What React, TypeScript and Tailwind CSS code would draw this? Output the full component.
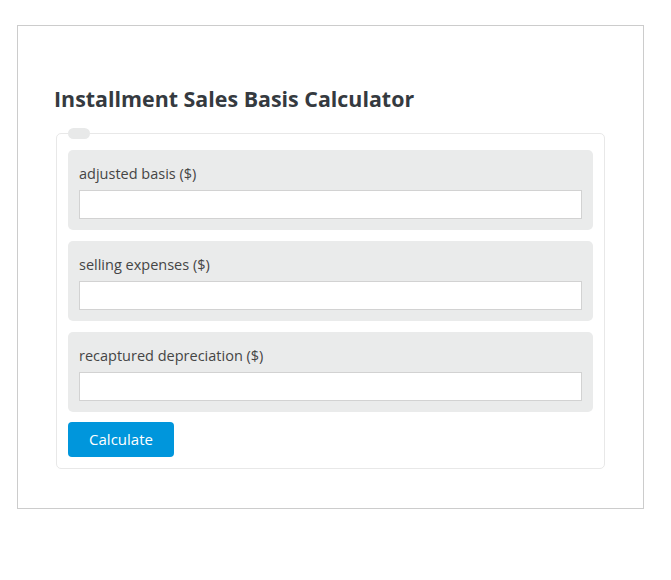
import { useState } from "react";

const FIELDS = [
  "adjusted basis ($)",
  "selling expenses ($)",
  "recaptured depreciation ($)",
];

export default function App() {
  const [values, setValues] = useState<string[]>(["", "", ""]);

  return (
    <div className="min-h-[580px] bg-white pl-[17px] pt-[25px] font-['Open_Sans',sans-serif]">
      <div className="w-[627px] border border-[#cccccc] px-[38px] pb-[39px] pt-[58px]">
        <h2 className="mb-[19px] ml-[-2px] text-[21.4px] font-bold leading-[30px] text-[#353a40]">
          Installment Sales Basis Calculator
        </h2>

        <div className="relative rounded-[5px] border border-[#e8e8e8] px-[11px] pb-[11px] pt-[16px]">
          {/* empty legend pill */}
          <div className="absolute left-[11px] top-[-6px] h-[11px] w-[22px] rounded-full bg-[#e8e9e9]" />

          <div className="flex flex-col gap-[11px]">
            {FIELDS.map((label, i) => (
              <div key={label} className="rounded-[5px] bg-[#eaebeb] px-[11px] pb-[11px] pt-[12px]">
                <label className="mb-[4px] block text-[14.5px] leading-[24px] text-[#454545]">
                  {label}
                </label>
                <input
                  type="text"
                  value={values[i]}
                  onChange={(e) => {
                    const next = [...values];
                    next[i] = e.target.value;
                    setValues(next);
                  }}
                  className="block h-[29px] w-full border border-[#d2d2d2] bg-white px-2 text-[14px] outline-none"
                />
              </div>
            ))}

            <div className="-mt-px">
              <button className="h-[35px] w-[106px] rounded-[4px] bg-[#0096dc] text-[15px] text-white">
                Calculate
              </button>
            </div>
          </div>
        </div>
      </div>
    </div>
  );
}
